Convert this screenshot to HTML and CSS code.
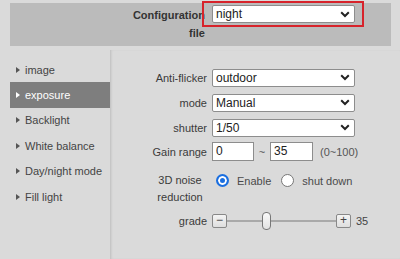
FILE: index.html
```html
<!DOCTYPE html>
<html>
<head>
<meta charset="utf-8">
<link rel="stylesheet" href="styles.css">
</head>
<body>
<div class="header">
  <div class="header-label">Configuration file</div>
  <div class="header-select">
    <div class="select">night</div>
    <span class="highlight"></span>
  </div>
</div>
<div class="main">
  <ul class="sidebar">
    <li class="nav-item"><span class="tri"></span>image</li>
    <li class="nav-item active"><span class="tri"></span>exposure</li>
    <li class="nav-item"><span class="tri"></span>Backlight</li>
    <li class="nav-item"><span class="tri"></span>White balance</li>
    <li class="nav-item"><span class="tri"></span>Day/night mode</li>
    <li class="nav-item"><span class="tri"></span>Fill light</li>
  </ul>
  <div class="content">
    <div class="row">
      <div class="label">Anti-flicker</div>
      <div class="select">outdoor</div>
    </div>
    <div class="row">
      <div class="label">mode</div>
      <div class="select">Manual</div>
    </div>
    <div class="row">
      <div class="label">shutter</div>
      <div class="select">1/50</div>
    </div>
    <div class="row row-gain">
      <div class="label">Gain range</div>
      <div class="field">
        <div class="input input-a">0</div>
        <span class="tilde">~</span>
        <div class="input input-b">35</div>
        <span class="hint">(0~100)</span>
      </div>
    </div>
    <div class="row row-noise">
      <div class="label label-wrap">3D noise reduction</div>
      <div class="field radios">
        <span class="radio checked"></span><span class="radio-text">Enable</span>
        <span class="radio"></span><span class="radio-text">shut down</span>
      </div>
    </div>
    <div class="row row-grade">
      <div class="label">grade</div>
      <div class="field slider">
        <span class="btn">−</span>
        <div class="track"><span class="thumb"></span></div>
        <span class="btn">+</span>
        <span class="value">35</span>
      </div>
    </div>
  </div>
</div>
</body>
</html>
```
FILE: styles.css
```css
* { box-sizing: border-box; }
html, body { margin: 0; padding: 0; }
body {
  width: 400px;
  height: 259px;
  overflow: hidden;
  background: #dadada;
  font-family: "Liberation Sans", Arial, sans-serif;
  font-size: 11px;
  color: #3a3a3a;
}
.header {
  margin: 3px 0 0 10px;
  width: 381px;
  height: 43px;
  background: #bbbbbb;
  display: flex;
  align-items: flex-start;
  padding: 2px 0 0 120px;
}
.header-label {
  width: 75px;
  text-align: right;
  font-weight: bold;
  line-height: 18px;
  padding-top: 1px;
  color: #333;
}
.header-select {
  position: relative;
  margin-left: 7px;
}
.highlight {
  position: absolute;
  left: -10px;
  top: -4px;
  width: 162px;
  height: 26px;
  border: 2px solid #d7232b;
}
.select {
  width: 143px;
  height: 18px;
  background: #fff url("data:image/svg+xml,%3Csvg xmlns='http://www.w3.org/2000/svg' width='10' height='7' viewBox='0 0 10 7'%3E%3Cpath d='M1.2 1.3 L5 5 L8.8 1.3' fill='none' stroke='%23222' stroke-width='2'/%3E%3C/svg%3E") no-repeat right 4px center;
  border: 1px solid #8d8d8d;
  border-radius: 2px;
  font-size: 12px;
  line-height: 16px;
  padding-left: 3px;
  color: #222;
}
.main {
  display: flex;
  margin-top: 4px;
  height: 209px;
}
.sidebar {
  list-style: none;
  margin: 0 0 0 10px;
  padding: 7px 0 0;
  width: 100px;
}
.nav-item {
  height: 25.4px;
  display: flex;
  align-items: center;
  padding-left: 6px;
  color: #444;
  font-size: 11px;
}
.tri {
  width: 0;
  height: 0;
  border-left: 4px solid #555;
  border-top: 3px solid transparent;
  border-bottom: 3px solid transparent;
  margin-right: 5px;
}
.nav-item.active {
  background: #7e7e7e;
  color: #fff;
}
.nav-item.active .tri { border-left-color: #fff; }
.content {
  flex: 1;
  border-left: 1px solid #c6c6c6;
  box-shadow: inset 1px 0 2px rgba(0,0,0,0.06);
  padding-top: 18px;
}
.row {
  display: flex;
  align-items: center;
  height: 19px;
  margin-bottom: 6px;
}
.label {
  width: 96px;
  text-align: right;
  margin-right: 5px;
  color: #3a3a3a;
}
.row-gain { margin-top: -1px; margin-bottom: 11px; }
.field { display: flex; align-items: center; }
.input {
  height: 19px;
  background: #fff;
  border: 1px solid #8d8d8d;
  font-size: 12px;
  line-height: 17px;
  padding-left: 3px;
  color: #222;
}
.input-a { width: 42px; }
.input-b { width: 43px; }
.tilde { width: 16px; text-align: center; color: #555; }
.hint { margin-left: 7px; color: #555; }
.row-noise {
  height: 34px;
  align-items: flex-start;
  margin-bottom: 5px;
}
.label-wrap {
  line-height: 17px;
  padding-left: 42px;
  text-align: center;
}
.radios { height: 17px; }
.radio {
  width: 13px;
  height: 13px;
  border-radius: 50%;
  border: 1px solid #767676;
  background: #fff;
  margin-left: 4px;
}
.radio.checked {
  border: 2px solid #1b6fe0;
  box-shadow: inset 0 0 0 2px #fff;
  background: #1b6fe0;
}
.radio-text { margin-left: 8px; margin-right: 6px; color: #4a4a4a; }
.row-grade { height: 19px; }
.slider { width: 160px; }
.btn {
  width: 15px;
  height: 14px;
  border: 1px solid #888;
  border-radius: 2px;
  background: linear-gradient(#f4f4f4, #dedede);
  font-size: 12px;
  line-height: 11px;
  text-align: center;
  color: #444;
}
.track {
  position: relative;
  width: 109px;
  height: 2px;
  background: #a9a9a9;
}
.thumb {
  position: absolute;
  left: 35px;
  top: -8px;
  width: 9px;
  height: 18px;
  border: 1px solid #777;
  border-radius: 4px;
  background: linear-gradient(#fafafa, #e2e2e2);
}
.value { margin-left: 5px; color: #444; font-size: 11px; }
```
